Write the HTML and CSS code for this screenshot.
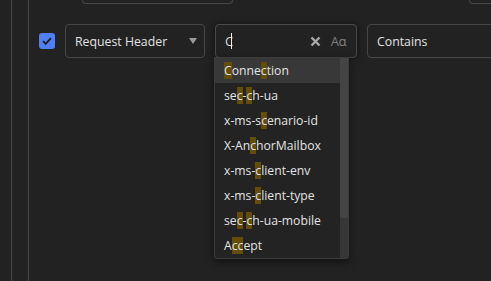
FILE: index.html
```
<!DOCTYPE html>
<html lang="en">
 <head>
  <meta charset="UTF-8">
  <title>Filter rules</title>
  <link rel="stylesheet" href="styles.css">
 </head>
<body>

<div class="tree">
 <div class="group">

  <!-- previous rule, scrolled out of view -->
  <div class="prev-row">
   <div class="prev-box"></div>
   <div class="prev-box wide"></div>
  </div>

  <div class="rule">
   <span class="check">
    <svg width="10" height="8" viewBox="0 0 10 8"><path d="M1 4.2 L3.7 6.8 L9 1.2" fill="none" stroke="#1c1c1c" stroke-width="1.8"/></svg>
   </span>

   <div class="select">
    <span>Request Header</span>
    <span class="arrow"></span>
   </div>

   <div class="search">
    <span class="query">C<span class="caret"></span></span>
    <svg class="clear" width="11" height="11" viewBox="0 0 11 11"><path d="M1.5 1.5 L9.5 9.5 M9.5 1.5 L1.5 9.5" stroke="#a8a8a8" stroke-width="2.4"/></svg>
    <span class="case">Aɑ</span>

    <div class="suggest">
     <ul>
      <li class="active"><mark>C</mark>onne<mark>c</mark>tion</li>
      <li>se<mark>c</mark>-<mark>c</mark>h-ua</li>
      <li>x-ms-s<mark>c</mark>enario-id</li>
      <li>X-An<mark>c</mark>horMailbox</li>
      <li>x-ms-<mark>c</mark>lient-env</li>
      <li>x-ms-<mark>c</mark>lient-type</li>
      <li>se<mark>c</mark>-<mark>c</mark>h-ua-mobile</li>
      <li>A<mark>cc</mark>ept</li>
     </ul>
     <div class="scroll"><div class="thumb"></div></div>
    </div>
   </div>

   <div class="select mode">
    <span>Contains</span>
   </div>
  </div>

 </div>
</div>

</body>
</html>
```

FILE: styles.css
```
html, body {
 margin: 0;
 height: 100%;
 overflow: hidden;
}

body {
 background: #222222;
 font-family: "Open Sans", "Noto Sans", sans-serif;
 font-size: 12px;
 color: #e2e2e2;
}

/* Baum-Linien */
.tree {
 margin-left: 11px;
 border-left: 1px solid #464646;
 height: 100%;
}

.tree .group {
 margin-left: 16px;
 border-left: 1px solid #464646;
 height: 100%;
 overflow: hidden;
}

/* vorige Zeile */
.prev-row {
 display: flex;
 height: 4px;
}

.prev-box {
 margin-left: 53px;
 width: 149px;
 height: 3px;
 border: 1px solid #474747;
 border-top: none;
 border-radius: 0 0 4px 4px;
 flex: none;
}

.prev-box.wide {
 margin-left: 236px;
 width: 80px;
}

/* Regel */
.rule {
 display: flex;
 align-items: center;
 gap: 10px;
 margin-top: 20px;
 padding-left: 10px;
}

.check {
 display: flex;
 align-items: center;
 justify-content: center;
 width: 16px;
 height: 16px;
 background: #4f7ff3;
 border-radius: 3px;
 flex: none;
}

.select,
.search {
 box-sizing: border-box;
 display: flex;
 align-items: center;
 height: 34px;
 border: 1px solid #464646;
 border-radius: 4px;
 padding: 0 9px;
 flex: none;
}

.select {
 width: 140px;
 justify-content: space-between;
 font-size: 12.3px;
}

.arrow {
 width: 0;
 height: 0;
 border-left: 4.5px solid transparent;
 border-right: 4.5px solid transparent;
 border-top: 6px solid #9a9a9a;
 margin-right: -2px;
}

.select.mode {
 width: 170px;
}

.search {
 position: relative;
 width: 142px;
 border-color: #4a4a4a;
 box-shadow: 0 0 6px rgba(0, 0, 0, 0.55);
}

.query {
 flex: 1;
 font-size: 13px;
 color: #d6d6d6;
}

.caret {
 display: inline-block;
 width: 1px;
 height: 16px;
 background: #eeeeee;
 vertical-align: -3px;
 margin-left: -2px;
}

.clear {
 margin-right: 10px;
}

.case {
 font-size: 13px;
 color: #7e7e7e;
 letter-spacing: -0.5px;
 margin-right: 1px;
}

/* Vorschlagsliste */
.suggest {
 position: absolute;
 left: -2px;
 top: 32px;
 width: 133px;
 display: flex;
 background: #232323;
 border: 1px solid #3c3c3c;
 border-radius: 0 0 3px 3px;
 box-shadow: 0 3px 8px rgba(0, 0, 0, 0.5);
 z-index: 2;
}

.suggest ul {
 list-style: none;
 margin: 0;
 padding: 0;
 flex: 1;
}

.suggest li {
 height: 25px;
 line-height: 25px;
 padding-left: 9px;
 font-size: 12.2px;
 color: #e2e2e2;
 white-space: nowrap;
}

.suggest li.active {
 background: #383838;
}

mark {
 background: #634d07;
 color: inherit;
}

.scroll {
 width: 8px;
 background: #363636;
}

.thumb {
 height: 160px;
 background: #444444;
 border-radius: 0 0 2px 2px;
}
```
